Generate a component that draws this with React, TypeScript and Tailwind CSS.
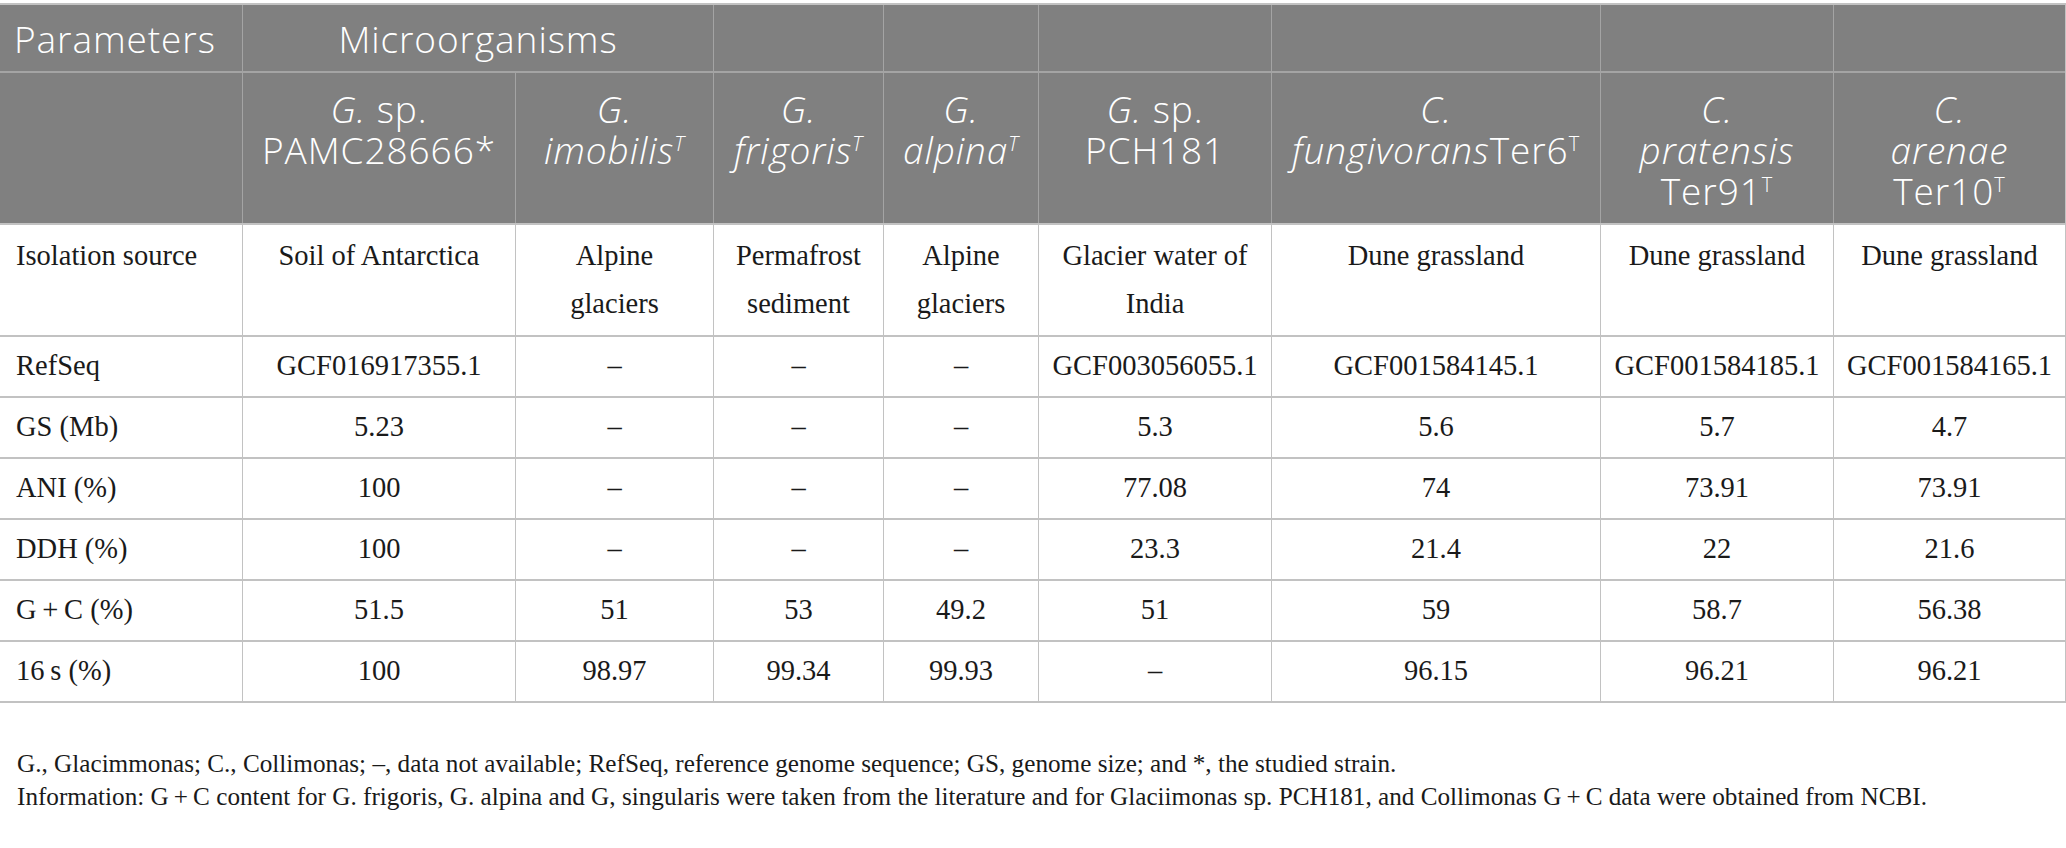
const cols = 'grid grid-cols-[242px_272px_197px_169px_154px_232px_328px_232px_231px]'

const Sup = ({ italic = false }: { italic?: boolean }) => (
  <span className={`align-super text-[20px] leading-none ${italic ? 'italic' : 'not-italic'}`}>T</span>
)

const headers = [
  <>
    <i>G.</i> sp.
    <br />
    PAMC28666*
  </>,
  <>
    <i>G.</i>
    <br />
    <i>imobilis</i>
    <Sup italic />
  </>,
  <>
    <i>G.</i>
    <br />
    <i>frigoris</i>
    <Sup italic />
  </>,
  <>
    <i>G.</i>
    <br />
    <i>alpina</i>
    <Sup italic />
  </>,
  <>
    <i>G.</i> sp.
    <br />
    PCH181
  </>,
  <>
    <i>C.</i>
    <br />
    <i>fungivorans</i>Ter6
    <Sup />
  </>,
  <>
    <i>C.</i>
    <br />
    <i>pratensis</i>
    <br />
    Ter91
    <Sup />
  </>,
  <>
    <i>C.</i>
    <br />
    <i>arenae</i>
    <br />
    Ter10
    <Sup />
  </>,
]

const isolation = [
  'Soil of Antarctica',
  <>Alpine<br />glaciers</>,
  <>Permafrost<br />sediment</>,
  <>Alpine<br />glaciers</>,
  <>Glacier water of<br />India</>,
  'Dune grassland',
  'Dune grassland',
  'Dune grassland',
]

const rows: [string, string[]][] = [
  ['RefSeq', ['GCF016917355.1', '–', '–', '–', 'GCF003056055.1', 'GCF001584145.1', 'GCF001584185.1', 'GCF001584165.1']],
  ['GS (Mb)', ['5.23', '–', '–', '–', '5.3', '5.6', '5.7', '4.7']],
  ['ANI (%)', ['100', '–', '–', '–', '77.08', '74', '73.91', '73.91']],
  ['DDH (%)', ['100', '–', '–', '–', '23.3', '21.4', '22', '21.6']],
  ['G\u2009+\u2009C (%)', ['51.5', '51', '53', '49.2', '51', '59', '58.7', '56.38']],
  ['16\u2009s (%)', ['100', '98.97', '99.34', '99.93', '–', '96.15', '96.21', '96.21']],
]

export default function App() {
  return (
    <div className="w-[2066px] bg-white pt-[3px] text-[#1a1a1a]">
      <div className="bg-[#c2c2c2] pt-[2px] pb-[2px] pr-px">
        {/* header */}
        <div className={`${cols} gap-x-px gap-y-[2px] bg-[#a4a4a4] font-['Open_Sans',sans-serif] text-[37px] font-light tracking-[0.025em] leading-[41px] text-white`}>
          <div className="flex h-[66px] items-center bg-[#808080] pl-[14px]">Parameters</div>
          <div className="col-span-2 flex h-[66px] items-center justify-center bg-[#808080]">Microorganisms</div>
          {[0, 1, 2, 3, 4, 5].map((i) => (
            <div key={i} className="bg-[#808080]" />
          ))}
          <div className="h-[150px] bg-[#808080]" />
          {headers.map((h, i) => (
            <div key={i} className="h-[150px] bg-[#808080] pt-[15px] text-center whitespace-nowrap">
              {h}
            </div>
          ))}
        </div>

        {/* body */}
        <div className={`${cols} mt-[2px] gap-x-px gap-y-[2px] font-['Liberation_Serif',serif] text-[28.5px]`}>
          <div className="h-[110px] bg-white pl-4 pt-[7px] leading-[48px]">Isolation source</div>
          {isolation.map((v, i) => (
            <div key={i} className="h-[110px] bg-white pt-[7px] text-center leading-[48px] whitespace-nowrap">
              {v}
            </div>
          ))}
          {rows.map(([label, values]) => (
            <div key={label} className="contents">
              <div className="flex h-[59px] items-center bg-white pl-4">{label}</div>
              {values.map((v, i) => (
                <div key={i} className="flex h-[59px] items-center justify-center bg-white">
                  {v}
                </div>
              ))}
            </div>
          ))}
        </div>
      </div>

      <div className="mt-[44px] pl-[17px] font-['Liberation_Serif',serif] text-[25.2px] leading-[33px] whitespace-nowrap">
        <p>
          G., Glacimmonas; C., Collimonas; –, data not available; RefSeq, reference genome sequence; GS, genome size; and *, the studied strain.
        </p>
        <p>
          Information: G{'\u2009'}+{'\u2009'}C content for G. frigoris, G. alpina and G, singularis were taken from the literature and for Glaciimonas sp. PCH181, and Collimonas G{'\u2009'}+{'\u2009'}C data were obtained from NCBI.
        </p>
      </div>
    </div>
  )
}
